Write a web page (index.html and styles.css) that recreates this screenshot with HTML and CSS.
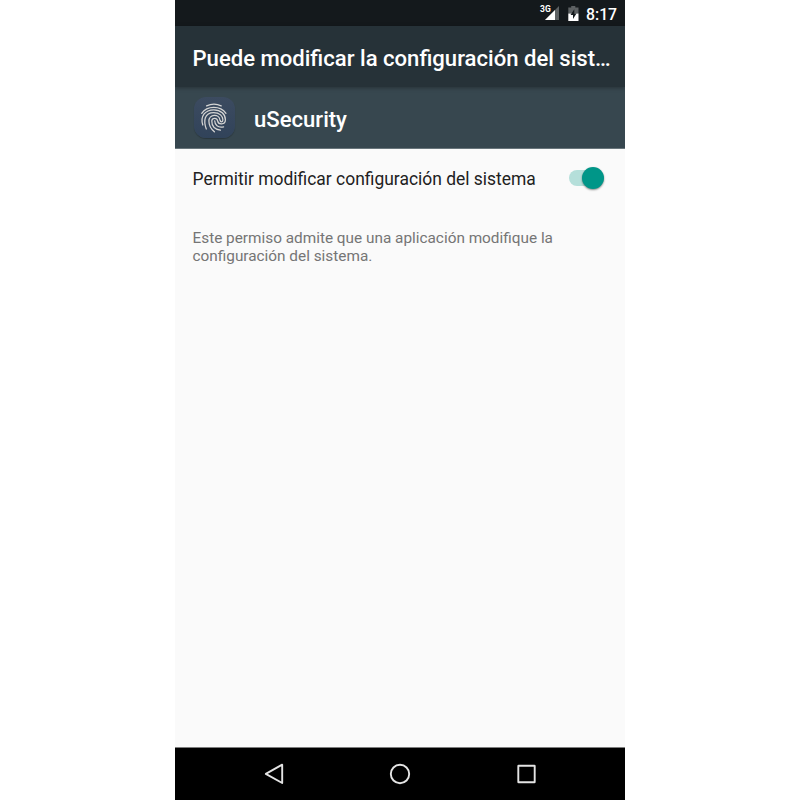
FILE: index.html
```html
<!DOCTYPE html>
<html lang="es">
<head>
<meta charset="utf-8">
<title>uSecurity</title>
<link rel="stylesheet" href="styles.css">
</head>
<body>
<div class="phone">
  <div class="status">
    <svg class="signal" width="20" height="18" viewBox="0 0 20 18">
      <path d="M19 2V16H5Z" fill="#5d6163"/><path d="M15 6V16H5Z" fill="#fff"/>
      <text x="0" y="8.4" class="network">3G</text>
    </svg>
    <svg class="battery" width="11" height="16" viewBox="0 0 11 16">
      <path d="M3.2 0H7.3V1.5H10.5V7.5H.3V1.5H3.2Z" fill="#5d6163"/>
      <path d="M.3 7.5H10.5V15H.3Z" fill="#fff"/>
      <path d="M6.3 3.3L2.5 9H5V13L8.5 7.4H6.3Z" fill="#14191c"/>
    </svg>
    <span class="clock">8:17</span>
  </div>
  <header class="title"><h1>Puede modificar la configuración del sist…</h1></header>
  <section class="app">
    <span class="badge">
      <svg width="28" height="30" viewBox="0 0 28 30">
        <g fill="none" stroke="#d5d5d4" stroke-width="1.25" stroke-linecap="round">
          <path d="M6.6 2.9Q14 -.5 21.2 2.9"/>
          <path d="M1.7 10.3C7 2.4 20.5 2.4 26 10.3"/>
          <path d="M2.8 22C0 13.5 5 6.8 13.8 6.8C20.9 6.8 25.4 11.5 25.4 16.7C25.4 22 18.2 22 17.6 17.8C17.1 14.4 12 14.5 11.8 17.9C11.7 22.6 15 26.2 20.4 27.2"/>
          <path d="M6.3 26C3.3 18 4.3 9.6 13.7 9.6C19.7 9.6 22.9 13.2 22.9 16.8C22.9 19.6 20.4 19.4 20 17.2C19.3 10.4 8.9 10.7 8.9 18C8.9 22.5 10.8 25.8 14.4 28.8"/>
          <path d="M14.7 17.8C14.8 21.8 17.7 25 23.6 23.8"/>
        </g>
      </svg>
    </span>
    <h2>uSecurity</h2>
  </section>
  <main>
    <div class="setting">
      <span>Permitir modificar configuración del sistema</span>
      <span class="switch"><i class="thumb"></i></span>
    </div>
    <p>Este permiso admite que una aplicación modifique la configuración del sistema.</p>
  </main>
  <nav>
    <svg width="22" height="24" viewBox="0 0 22 24"><path d="M19.2 2.7V21L2.8 11.9Z"/></svg>
    <svg width="22" height="24" viewBox="0 0 22 24"><circle cx="11" cy="12" r="9.2"/></svg>
    <svg width="22" height="24" viewBox="0 0 22 24"><rect x="3.3" y="3.8" width="16.4" height="16.4" rx=".3"/></svg>
  </nav>
</div>
</body>
</html>
```
FILE: styles.css
```css
* { box-sizing: border-box; }
body { margin: 0; background: #fff; font-family: Roboto, sans-serif; }
h1, h2, p { margin: 0; }
svg { display: block; }
.phone { display: flex; flex-direction: column; overflow: hidden; width: 450px; height: 800px; margin: 0 auto; background: #fafafa; }
.status { display: flex; height: 26px; padding-right: 9px; justify-content: flex-end; background: #14191c; color: #fff; }
.signal { margin: 4px 8px 0 0; overflow: visible; }
.network { font: 700 8.5px Roboto, sans-serif; fill: #fff; }
.battery { margin: 6px 7px 0 0; }
.clock { width: 30px; font-size: 15.8px; font-weight: 500; line-height: 29px; white-space: nowrap; }
.title { position: relative; height: 61px; padding-left: 17.5px; background: #263238; color: #fff; box-shadow: 0 1px 4px rgba(0,0,0,.3); }
.title h1 { white-space: nowrap; font-size: 22.1px; font-weight: 500; line-height: 64px; }
.app { display: flex; align-items: center; height: 62px; padding: 0 0 0 18.5px; background: #37474f; border-bottom: 1px solid #68757b; color: #fff; }
.badge { display: grid; place-items: center; width: 41px; height: 41px; margin-right: 19.5px; border-radius: 12px; background: linear-gradient(#3c4b60, #31435a); box-shadow: 0 1px 1px rgba(0,0,0,.25); }
.app h2 { font-size: 22.1px; font-weight: 500; line-height: 30px; padding-top: 2px; }
main { flex: 1; }
.setting { display: flex; align-items: center; justify-content: space-between; height: 59px; padding: 0 22px 0 17.5px; color: #212121; font-size: 17.44px; }
.setting > span:first-child { padding-top: 1px; }
.switch { display: flex; align-items: center; justify-content: flex-end; width: 34px; height: 16px; margin-bottom: 1px; border-radius: 8px; background: #b5dfda; }
.thumb { flex: none; width: 22px; height: 22px; margin-right: -1px; border-radius: 50%; background: #009688; box-shadow: 0 1px 2px rgba(0,0,0,.45); }
main p { padding: 21px 60px 0 17.5px; color: #757575; font-size: 15.35px; line-height: 18px; }
nav { display: flex; align-items: center; justify-content: space-between; height: 53px; padding: 0 88px; background: #000; border-top: 1px solid #7d7d7d; }
nav svg { fill: none; stroke: #e4e4e4; stroke-width: 1.9; stroke-linejoin: round; }
```
